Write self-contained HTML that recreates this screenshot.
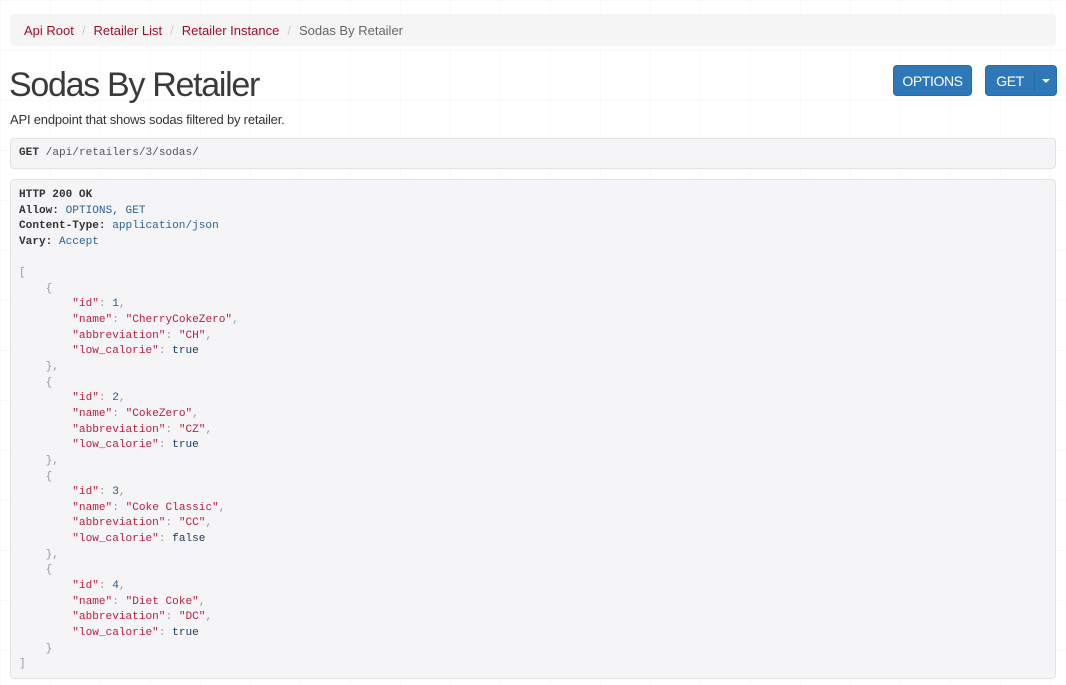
<!DOCTYPE html>
<html><head><meta charset="utf-8"><style>
body{margin:0;background:#fff;background-image:linear-gradient(rgba(0,0,0,.025) 1px,transparent 1px),linear-gradient(90deg,rgba(0,0,0,.025) 1px,transparent 1px);background-size:50px 50px;font-family:"Liberation Sans",sans-serif;color:#333;width:1066px;height:685px;overflow:hidden;position:relative}
.bc{position:absolute;left:10px;top:14px;width:1046px;height:32px;background:#f5f5f5;border-radius:4px;font-size:13px;line-height:33px;box-sizing:border-box;padding-left:14px}
.bc a{color:#a00d2a;text-decoration:none}
.bc .s{color:#ccc;padding:0 8px}
.bc .c{color:#666}
h1{position:absolute;left:9px;top:63px;margin:0;font-weight:normal;font-size:34px;line-height:44px;color:#3a3a3a;font-family:"Liberation Sans",sans-serif;letter-spacing:-1.3px}
.desc{position:absolute;left:10px;top:112px;font-size:13px;letter-spacing:-0.2px}
.btn{position:absolute;top:65px;height:31px;background:#2f78b7;border:1px solid #2a6aa3;border-radius:4px;color:#fff;font-size:14px;line-height:31px;text-align:center;box-sizing:border-box;letter-spacing:-0.4px}
pre{margin:0;font-family:"Liberation Mono",monospace;font-size:11.1px;line-height:15.64px;position:absolute;left:10px;width:1046px;box-sizing:border-box;background:#f5f5f7;border:1px solid #e3e3e3;border-radius:4px;padding:0 8px;color:#333}
b{font-weight:bold}
.v{color:#2a6496}.k,.s2{color:#b8203f}.p{color:#999}.n{color:#195f91}.l{color:#1a3a66}
</style></head><body>
<div class="bc"><a>Api Root</a><span class="s">/</span><a>Retailer List</a><span class="s">/</span><a>Retailer Instance</a><span class="s">/</span><span class="c">Sodas By Retailer</span></div>
<h1>Sodas By Retailer</h1>
<div class="btn" style="left:893px;width:79px">OPTIONS</div>
<div class="btn" style="left:985px;width:72px"><span style="position:absolute;left:0;width:48px">GET</span><span style="position:absolute;left:48px;top:4px;bottom:4px;border-left:1px solid #2a6aa3"></span><span style="position:absolute;left:56px;top:13px;width:0;height:0;border-left:4px solid transparent;border-right:4px solid transparent;border-top:4px solid #fff"></span></div>
<div class="desc">API endpoint that shows sodas filtered by retailer.</div>
<pre style="top:138px;height:31px;line-height:29px"><b>GET</b> <span style="color:#555">/api/retailers/3/sodas/</span></pre>
<pre style="top:179px;height:500px;padding-top:8px"><b>HTTP 200 OK</b>
<b>Allow:</b> <span class="v">OPTIONS, GET</span>
<b>Content-Type:</b> <span class="v">application/json</span>
<b>Vary:</b> <span class="v">Accept</span>

<span class="p">[</span>
    <span class="p">{</span>
        <span class="k">"id"</span><span class="p">:</span> <span class="n">1</span><span class="p">,</span>
        <span class="k">"name"</span><span class="p">:</span> <span class="s2">"CherryCokeZero"</span><span class="p">,</span>
        <span class="k">"abbreviation"</span><span class="p">:</span> <span class="s2">"CH"</span><span class="p">,</span>
        <span class="k">"low_calorie"</span><span class="p">:</span> <span class="l">true</span>
    <span class="p">},</span>
    <span class="p">{</span>
        <span class="k">"id"</span><span class="p">:</span> <span class="n">2</span><span class="p">,</span>
        <span class="k">"name"</span><span class="p">:</span> <span class="s2">"CokeZero"</span><span class="p">,</span>
        <span class="k">"abbreviation"</span><span class="p">:</span> <span class="s2">"CZ"</span><span class="p">,</span>
        <span class="k">"low_calorie"</span><span class="p">:</span> <span class="l">true</span>
    <span class="p">},</span>
    <span class="p">{</span>
        <span class="k">"id"</span><span class="p">:</span> <span class="n">3</span><span class="p">,</span>
        <span class="k">"name"</span><span class="p">:</span> <span class="s2">"Coke Classic"</span><span class="p">,</span>
        <span class="k">"abbreviation"</span><span class="p">:</span> <span class="s2">"CC"</span><span class="p">,</span>
        <span class="k">"low_calorie"</span><span class="p">:</span> <span class="l">false</span>
    <span class="p">},</span>
    <span class="p">{</span>
        <span class="k">"id"</span><span class="p">:</span> <span class="n">4</span><span class="p">,</span>
        <span class="k">"name"</span><span class="p">:</span> <span class="s2">"Diet Coke"</span><span class="p">,</span>
        <span class="k">"abbreviation"</span><span class="p">:</span> <span class="s2">"DC"</span><span class="p">,</span>
        <span class="k">"low_calorie"</span><span class="p">:</span> <span class="l">true</span>
    <span class="p">}</span>
<span class="p">]</span></pre>
</body></html>
